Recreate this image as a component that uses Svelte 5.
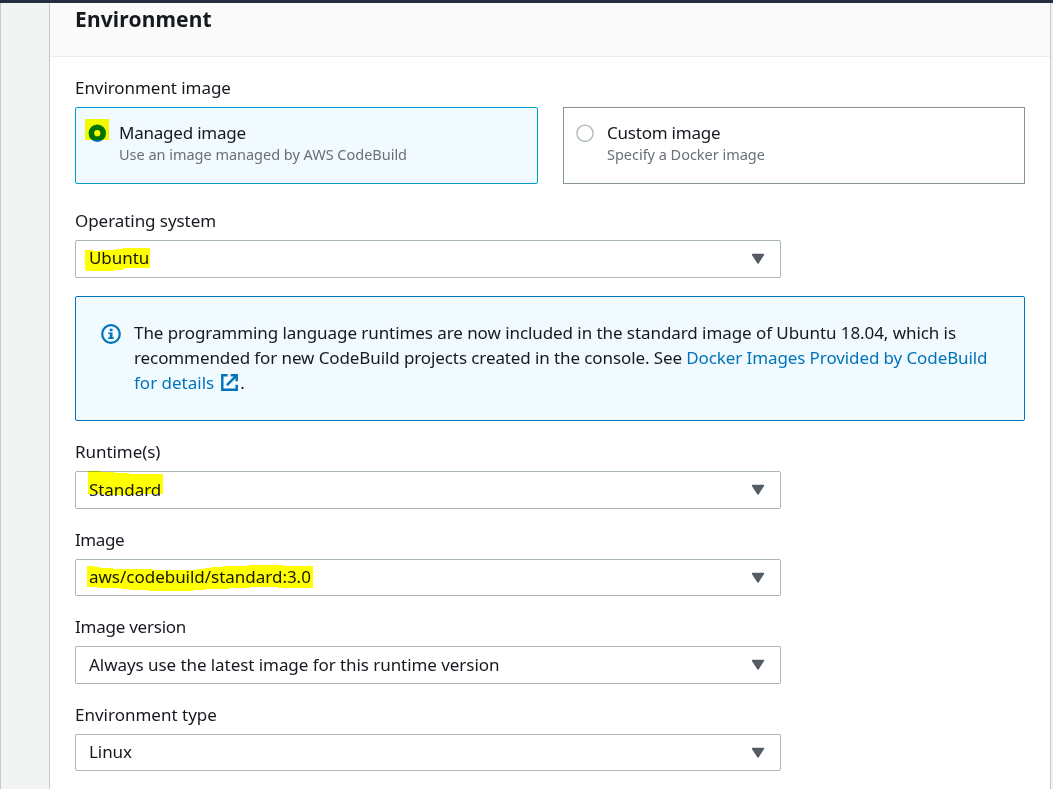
<script>
  const fields = [
    { label: 'Runtime(s)', value: 'Standard', key: 'standard',
      mark: 'M13 0H25V1H40V2H54V3H88V23H60V24H30V23H13Z' },
    { label: 'Image', value: 'aws/codebuild/standard:3.0', key: 'image',
      mark: 'M12 7H20V8H25V9H38V10H78V11H122V10H130V9H136V8H148V7H173V6H209V7H238V29H203V28H175V29H154V30H130V31H118V32H73V31H55V30H46V29H24V28H12Z' },
    { label: 'Image version', value: 'Always use the latest image for this runtime version', key: 'version' },
    { label: 'Environment type', value: 'Linux', key: 'type' }
  ];
  const system = { label: 'Operating system', value: 'Ubuntu', key: 'os',
    mark: 'M10 10H18V11H26V10H40V9H48V8H75V28H50V29H48V30H39V31H11V30H10Z' };
</script>

{#snippet field(f)}
  <div class="field">
    <div class="label l-{f.key}">{f.label}</div>
    <div class="select">
      <span class="value v-{f.key}">{f.value}</span>
      <svg class="caret" width="14" height="11" viewBox="0 0 14 11"><path d="M1.5 1.5H12.5L7 10Z" fill="#545b64" stroke="#545b64" stroke-width="1.4" stroke-linejoin="round" /></svg>
      {#if f.mark}
        <svg class="mark" width="250" height="38" viewBox="0 0 250 38"><path d={f.mark} fill="#ff0" /></svg>
      {/if}
    </div>
  </div>
{/snippet}

<div class="page">
  <div class="topbar"></div>
  <div class="body">
    <div class="gutter"></div>
    <main class="panel">
      <header><h2>Environment</h2></header>
      <div class="content">
        <div class="label l-envimage">Environment image</div>
        <div class="tiles">
          <div class="tile selected">
            <div class="radio">
              <svg width="18" height="18" viewBox="0 0 18 18"><circle cx="9.3" cy="9.2" r="5.9" fill="#fff" stroke="#0073bb" stroke-width="5.6" /></svg>
              <i class="radio-mark"></i>
            </div>
            <div class="tile-text">
              <div class="name n-managed">Managed image</div>
              <div class="desc d-managed">Use an image managed by AWS CodeBuild</div>
            </div>
          </div>
          <div class="tile">
            <div class="radio">
              <svg width="18" height="18" viewBox="0 0 18 18"><circle cx="9" cy="9.3" r="8.1" fill="#fff" stroke="#aab7b8" stroke-width="1.3" /></svg>
            </div>
            <div class="tile-text">
              <div class="name n-custom">Custom image</div>
              <div class="desc d-custom">Specify a Docker image</div>
            </div>
          </div>
        </div>
        <div class="system">{@render field(system)}</div>
        <div class="alert">
          <svg class="info" width="20" height="20" viewBox="0 0 20 20">
            <circle cx="10" cy="10" r="8.8" fill="none" stroke="#0073bb" stroke-width="2.2" />
            <path d="M8.7 4.8H11.5V7.2H8.7ZM7.3 8.4H11.5V13.2H12.8V15H7.2V13.2H8.8V10.1H7.3Z" fill="#0073bb" />
          </svg>
          <div class="message">
            <div><span class="m1">The programming language runtimes are now included in the standard image of Ubuntu 18.04, which is</span></div>
            <div><span class="m2">recommended for new CodeBuild projects created in the console. See <a>Docker Images Provided by CodeBuild</a></span></div>
            <div class="last"><a class="m3">for details</a>
              <svg width="17" height="17" viewBox="0 0 16 16" fill="none" stroke="#0073bb" stroke-width="2.3"><path d="M6.2 1.2H1.2V14.8H14.8V10M9.2 1.2H14.8V6.8M14 2L5.6 10.4" /></svg><span>.</span></div>
          </div>
        </div>
        {#each fields as f}{@render field(f)}{/each}
      </div>
    </main>
    <div class="edge"></div>
  </div>
</div>

<style>
  :global(body) { margin: 0; overflow: hidden; }
  .page { width: 1053px; height: 789px; overflow: hidden; display: flex; flex-direction: column; background: #f2f3f3; color: #16191f; font: 17px/24px "Noto Sans", "Open Sans", sans-serif; white-space: nowrap; box-sizing: border-box; }
  .page * { box-sizing: border-box; }
  .topbar { height: 3px; flex: none; background: #232f3e; }
  .body { flex: 1; min-height: 0; display: flex; }
  .gutter { width: 49px; border-left: 1px solid #c5cccc; }
  .panel { width: 1002px; border-left: 1px solid #c4c9c9; border-right: 1px solid #c4c9c9; background: #fff; }
  .edge { flex: 1; background: #f1f2f2; }
  header { height: 54px; border-bottom: 1px solid #eaeded; background: #fafafa; padding: 2px 25px; }
  h2 { margin: 0; font-size: 21px; line-height: 28px; font-weight: 700; letter-spacing: 0.15px; }
  .content { padding: 19px 25px 0; }
  .label { height: 24px; margin-bottom: 7px; letter-spacing: -0.06px; }
  .l-version { letter-spacing: -0.24px; }
  .l-image { letter-spacing: -0.4px; }
  .l-type { letter-spacing: 0; }
  .tiles { display: grid; grid-template-columns: 463px 462px; gap: 25px; }
  .tile { height: 77px; border: 1px solid #879596; display: flex; gap: 13px; padding: 13px 12px; background: #fff; }
  .selected { border-color: #00a1c9; border-radius: 2px; background: #f1faff; }
  .radio { position: relative; width: 18px; height: 18px; margin-top: 3px; }
  .radio svg { display: block; }
  .radio-mark { position: absolute; left: -3px; top: -5px; width: 24px; height: 21px; background: #ff0; mix-blend-mode: multiply; }
  .name { letter-spacing: -0.22px; }
  .desc { font-size: 14.5px; line-height: 18px; color: #687078; letter-spacing: -0.02px; }
  .system { margin-top: 25px; }
  .field { height: 87.6px; }
  .system .field { height: 87px; }
  .select { position: relative; height: 37.5px; border: 1px solid #aab7b8; border-radius: 2px; width: 706px; padding: 0 15px 0 13px; display: flex; justify-content: space-between; align-items: center; }
  .value { letter-spacing: -0.06px; }
  .v-image { letter-spacing: -0.02px; }
  .v-os, .v-type { padding-bottom: 2px; }
  .mark { position: absolute; left: -1px; top: -1px; mix-blend-mode: multiply; }
  .alert { height: 125px; margin-bottom: 19px; border: 1px solid #0073bb; border-radius: 2px; background: #f1faff; display: flex; gap: 13px; padding: 23px 25px; }
  .info { margin-top: 4px; flex: none; }
  .message { line-height: 25px; }
  .message a { color: #0073bb; }
  .m1 { letter-spacing: -0.07px; }
  .m2 { letter-spacing: -0.1px; }
  .last { display: flex; align-items: center; }
  .last svg { margin: 0 2px 0 7px; }
</style>
